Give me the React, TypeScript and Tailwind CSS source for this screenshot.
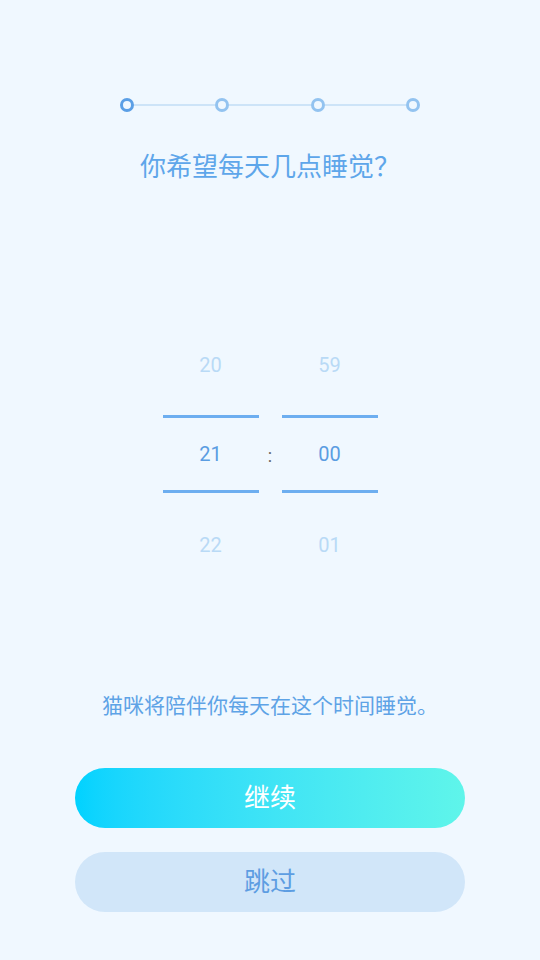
const STEPS = [true, false, false, false]

const HOURS = ['20', '21', '22']
const MINUTES = ['59', '00', '01']

function Column({ values }: { values: string[] }) {
  return (
    <div className="flex w-[96px] flex-col items-center">
      <div className="flex h-[90px] items-center justify-center text-[20px] text-[#b9daf6]">{values[0]}</div>
      <div className="mt-[5px] h-[3px] w-full bg-[#6daef0]" />
      <div className="flex h-[72px] items-center justify-center text-[20px] text-[#5b9de2]">{values[1]}</div>
      <div className="mb-[7px] h-[3px] w-full bg-[#6daef0]" />
      <div className="flex h-[90px] items-center justify-center text-[20px] text-[#b9daf6]">{values[2]}</div>
    </div>
  )
}

export default function App() {
  return (
    <div
      className="flex h-[960px] w-[540px] flex-col items-center bg-[#f0f8ff]"
      style={{ fontFamily: 'Roboto, "Noto Sans CJK SC", sans-serif' }}
    >
      {/* Progress steps */}
      <div className="mt-[98px] flex w-[300px] items-center">
        {STEPS.map((active, i) => (
          <div key={i} className={i === 0 ? 'flex items-center' : 'flex flex-1 items-center'}>
            {i > 0 && <div className="h-[2px] flex-1 bg-[#cde4f8]" />}
            <span
              className={
                active
                  ? 'h-[14px] w-[14px] rounded-full border-[3px] border-[#5b9fe6]'
                  : 'h-[14px] w-[14px] rounded-full border-[3px] border-[#93c3f0]'
              }
            />
          </div>
        ))}
      </div>

      <h1
        className="mt-[35px] text-[26px] leading-[36px] text-[#5ea6ea]"
        style={{ fontFamily: '"Noto Sans CJK SC", sans-serif' }}
      >
        你希望每天几点睡觉？
      </h1>

      {/* Time picker */}
      <div className="mt-[137px] flex items-center">
        <Column values={HOURS} />
        <span className="w-[23px] text-center text-[18px] text-[#666]">:</span>
        <Column values={MINUTES} />
      </div>

      <p className="mt-[102px] text-[21px] leading-[28px] text-[#5ea3e6]">猫咪将陪伴你每天在这个时间睡觉。</p>

      <button className="mt-[48px] h-[60px] w-[390px] rounded-full bg-gradient-to-r from-[#00d2ff] to-[#5ff5ea] text-[26px] text-white">
        继续
      </button>
      <button className="mt-[24px] h-[60px] w-[390px] rounded-full bg-[#d1e6f9] text-[26px] text-[#5d9de2]">
        跳过
      </button>
    </div>
  )
}
